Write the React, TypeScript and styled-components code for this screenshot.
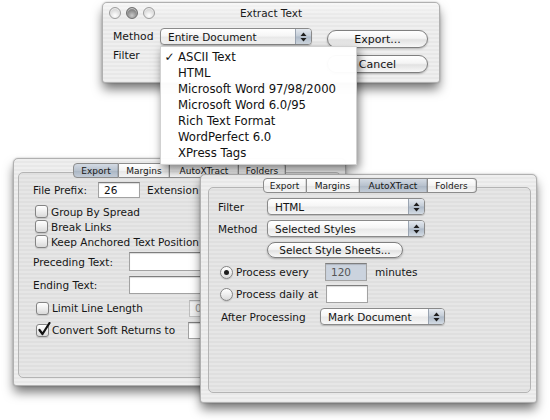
import React from "react";
import styled, { createGlobalStyle, css } from "styled-components";

const Global = createGlobalStyle`
  html, body { margin: 0; padding: 0; background: #ffffff; }
  body { font-family: "DejaVu Sans", "Noto Sans", sans-serif; color: #141414; }
`;

const Desktop = styled.div`
  position: relative;
  width: 550px;
  height: 420px;
  overflow: hidden;
  background: #ffffff;
`;

const pinstripe = css`
  background-color: #ececec;
  background-image: repeating-linear-gradient(
    to bottom,
    #efefef 0px,
    #efefef 2px,
    #e8e8e8 2px,
    #e8e8e8 4px
  );
`;

const Window = styled.div<{ $x: number; $y: number; $w: number; $h: number; $z: number; $pad?: string }>`
  position: absolute;
  left: ${(p) => p.$x}px;
  top: ${(p) => p.$y}px;
  width: ${(p) => p.$w}px;
  height: ${(p) => p.$h}px;
  z-index: ${(p) => p.$z};
  box-sizing: border-box;
  padding: ${(p) => p.$pad ?? "0"};
  ${pinstripe}
  border: 1px solid #b0b0b0;
  border-radius: 5px 5px 3px 3px;
  box-shadow: 0 7px 11px -1px rgba(0, 0, 0, 0.55), 0 0 2px rgba(0, 0, 0, 0.25);
  display: flex;
  flex-direction: column;
`;

const TitleBar = styled.div`
  height: 20px;
  display: grid;
  grid-template-columns: 1fr auto 1fr;
  align-items: center;
  background-image: linear-gradient(to bottom, rgba(255, 255, 255, 0.55), rgba(255, 255, 255, 0) 70%);
  border-radius: 4px 4px 0 0;
`;

const Lights = styled.div`
  display: flex;
  gap: 5px;
  padding-left: 6px;
`;

const Light = styled.span<{ $dark?: boolean }>`
  width: 12px;
  height: 12px;
  border-radius: 50%;
  box-sizing: border-box;
  border: 1px solid ${(p) => (p.$dark ? "#6f6f6f" : "#9d9d9d")};
  background: ${(p) =>
    p.$dark
      ? "radial-gradient(circle at 50% 75%, #c9c9c9 0%, #8a8a8a 55%, #5f5f5f 100%)"
      : "radial-gradient(circle at 50% 75%, #ffffff 0%, #e2e2e2 50%, #bdbdbd 100%)"};
  box-shadow: inset 0 1px 1px rgba(255, 255, 255, 0.7);
`;

const Title = styled.div`
  font-size: 10.5px;
  color: #1a1a1a;
  text-align: center;
  white-space: nowrap;
`;

const TopBody = styled.div`
  flex: 1;
  display: flex;
  padding-left: 10px;
`;

const FormCol = styled.div`
  display: flex;
  flex-direction: column;
  padding-top: 4px;
`;

const ButtonCol = styled.div`
  display: flex;
  flex-direction: column;
  gap: 7px;
  padding-top: 7px;
  margin-left: 15px;
`;

const FormRow = styled.div<{ $h?: number; $mt?: number; $pl?: number }>`
  display: flex;
  align-items: center;
  height: ${(p) => p.$h ?? 19}px;
  margin-top: ${(p) => p.$mt ?? 0}px;
  padding-left: ${(p) => p.$pl ?? 0}px;
  white-space: nowrap;
`;

const Label = styled.span<{ $w?: number; $size?: number; $ml?: number }>`
  display: inline-block;
  width: ${(p) => (p.$w ? `${p.$w}px` : "auto")};
  margin-left: ${(p) => p.$ml ?? 0}px;
  flex-shrink: 0;
  font-size: ${(p) => p.$size ?? 10.5}px;
  color: #161616;
  white-space: nowrap;
`;

const Popup = styled.div<{ $w: number; $size?: number }>`
  width: ${(p) => p.$w}px;
  height: 17px;
  flex-shrink: 0;
  box-sizing: border-box;
  display: flex;
  border: 1px solid #8a8a8a;
  border-radius: 4px;
  background: linear-gradient(to bottom, #ffffff 0%, #f6f6f6 45%, #e9e9e9 55%, #f7f7f7 100%);
  box-shadow: 0 1px 1px rgba(0, 0, 0, 0.18);
  font-size: ${(p) => p.$size ?? 10.5}px;
  overflow: hidden;
`;

const PopupText = styled.span`
  flex: 1;
  display: flex;
  align-items: center;
  padding-left: 7px;
  white-space: nowrap;
  overflow: hidden;
`;

const PopupArrows = styled.span`
  width: 15px;
  flex-shrink: 0;
  border-left: 1px solid #9aa4b1;
  background: linear-gradient(to bottom, #e4e9ef 0%, #c3ccd7 48%, #aebac8 52%, #d3dbe4 100%);
  display: flex;
  align-items: center;
  justify-content: center;
`;

const PushButton = styled.div<{ $w: number; $h?: number; $size?: number }>`
  width: ${(p) => p.$w}px;
  height: ${(p) => p.$h ?? 18}px;
  flex-shrink: 0;
  box-sizing: border-box;
  border: 1px solid #7f7f7f;
  border-radius: 10px;
  background: linear-gradient(to bottom, #ffffff 0%, #f4f4f4 45%, #e2e2e2 55%, #f8f8f8 100%);
  box-shadow: 0 1px 2px rgba(0, 0, 0, 0.25);
  display: flex;
  align-items: center;
  justify-content: center;
  font-size: ${(p) => p.$size ?? 11}px;
  color: #141414;
  white-space: nowrap;
`;

const Menu = styled.div`
  position: absolute;
  left: 160px;
  top: 46px;
  width: 197px;
  height: 119px;
  z-index: 4;
  box-sizing: border-box;
  padding-top: 2px;
  background: rgba(255, 255, 255, 0.97);
  border: 1px solid rgba(0, 0, 0, 0.18);
  box-shadow: 2px 4px 9px rgba(0, 0, 0, 0.5);
`;

const MenuItem = styled.div`
  display: grid;
  grid-template-columns: 17px 1fr;
  align-items: center;
  height: 16px;
  font-size: 11.7px;
  color: #111;
  white-space: nowrap;
`;

const Check = styled.span`
  display: flex;
  justify-content: center;
  font-size: 12px;
  font-weight: bold;
`;

const TabStrip = styled.div`
  display: flex;
  justify-content: center;
  height: 15px;
  position: relative;
  z-index: 1;
`;

const Tab = styled.div<{ $w: number; $active?: boolean; $first?: boolean; $last?: boolean }>`
  width: ${(p) => p.$w}px;
  height: 15px;
  box-sizing: border-box;
  border: 1px solid #8c8c8c;
  border-left-width: ${(p) => (p.$first ? 1 : 0)}px;
  border-radius: ${(p) => (p.$first ? "4px 0 0 4px" : p.$last ? "0 4px 4px 0" : "0")};
  background: ${(p) =>
    p.$active
      ? "linear-gradient(to bottom, #d3dae3 0%, #b8c2ce 50%, #a9b5c3 52%, #c3ccd7 100%)"
      : "linear-gradient(to bottom, #ffffff 0%, #f3f3f3 50%, #e6e6e6 52%, #f5f5f5 100%)"};
  box-shadow: inset -1px 0 0 rgba(0, 0, 0, 0.12);
  display: flex;
  align-items: center;
  justify-content: center;
  font-size: 9px;
  color: #161616;
  white-space: nowrap;
`;

const GroupBox = styled.div<{ $pad: string }>`
  flex: 1;
  margin-top: -6px;
  box-sizing: border-box;
  border: 1px solid #b4b4b4;
  border-radius: 5px;
  background: rgba(0, 0, 0, 0.035);
  padding: ${(p) => p.$pad};
  display: flex;
  flex-direction: column;
`;

const Field = styled.div<{ $w: number; $h: number; $tone?: "white" | "sel" | "off" }>`
  width: ${(p) => p.$w}px;
  height: ${(p) => p.$h}px;
  flex-shrink: 0;
  box-sizing: border-box;
  border: 1px solid #a2a2a2;
  border-top-color: #7e7e7e;
  box-shadow: inset 0 1px 1px rgba(0, 0, 0, 0.15);
  background: ${(p) => (p.$tone === "sel" ? "#cbd3de" : "#ffffff")};
  opacity: ${(p) => (p.$tone === "off" ? 0.55 : 1)};
  display: flex;
  align-items: center;
  padding-left: 5px;
  font-size: 10.5px;
  color: ${(p) => (p.$tone === "white" ? "#111" : "#555")};
`;

const Box13 = styled.span<{ $round?: boolean }>`
  width: 13px;
  height: 13px;
  flex-shrink: 0;
  box-sizing: border-box;
  border: 1px solid #848484;
  border-radius: ${(p) => (p.$round ? "50%" : "3px")};
  background: linear-gradient(to bottom, #ffffff 0%, #eeeeee 50%, #d9d9d9 100%);
  box-shadow: 0 1px 1px rgba(0, 0, 0, 0.12);
  display: flex;
  align-items: center;
  justify-content: center;
  position: relative;
  margin-right: 3px;
`;

const Dot = styled.span`
  width: 5px;
  height: 5px;
  border-radius: 50%;
  background: #1c1c1c;
`;

const CheckMark = styled.svg`
  position: absolute;
  left: 1px;
  top: -3px;
`;

const Arrows = () => (
  <svg width="7" height="10" viewBox="0 0 7 10">
    <path d="M3.5 0.5 L6.5 4 L0.5 4 Z" fill="#1e1e1e" />
    <path d="M3.5 9.5 L6.5 6 L0.5 6 Z" fill="#1e1e1e" />
  </svg>
);

const PopupButton = ({ w, text, size }: { w: number; text: string; size?: number }) => (
  <Popup $w={w} $size={size}>
    <PopupText>{text}</PopupText>
    <PopupArrows>
      <Arrows />
    </PopupArrows>
  </Popup>
);

const CheckBox = ({ checked }: { checked?: boolean }) => (
  <Box13>
    {checked && (
      <CheckMark width="13" height="14" viewBox="0 0 13 14">
        <path d="M1.5 8 L4.5 12 L11.5 1" fill="none" stroke="#111" strokeWidth="2.2" strokeLinecap="round" strokeLinejoin="round" />
      </CheckMark>
    )}
  </Box13>
);

const Radio = ({ on }: { on?: boolean }) => <Box13 $round>{on && <Dot />}</Box13>;

const tabsLeft = [
  { t: "Export", w: 46 },
  { t: "Margins", w: 51 },
  { t: "AutoXTract", w: 69 },
  { t: "Folders", w: 47 },
];
const tabsRight = [
  { t: "Export", w: 44 },
  { t: "Margins", w: 53 },
  { t: "AutoXTract", w: 68 },
  { t: "Folders", w: 49 },
];

const Tabs = ({ items, active }: { items: { t: string; w: number }[]; active: number }) => (
  <TabStrip>
    {items.map((it, i) => (
      <Tab key={it.t} $w={it.w} $active={i === active} $first={i === 0} $last={i === items.length - 1}>
        {it.t}
      </Tab>
    ))}
  </TabStrip>
);

const menuItems = [
  "ASCII Text",
  "HTML",
  "Microsoft Word 97/98/2000",
  "Microsoft Word 6.0/95",
  "Rich Text Format",
  "WordPerfect 6.0",
  "XPress Tags",
];

export default function App() {
  return (
    <>
      <Global />
      <Desktop>
        {/* Left panel: Export tab */}
        <Window $x={13} $y={158} $w={333} $h={228} $z={1} $pad="4px 4px 7px 4px">
          <Tabs items={tabsLeft} active={0} />
          <GroupBox $pad="8px 0 0 14px">
            <FormRow $h={18}>
              <Label $w={65}>File Prefix:</Label>
              <Field $w={42} $h={16} $tone="white">26</Field>
              <Label $ml={7}>Extension</Label>
            </FormRow>
            <FormRow $h={15} $mt={5} $pl={2}>
              <CheckBox />
              <Label>Group By Spread</Label>
            </FormRow>
            <FormRow $h={15} $pl={2}>
              <CheckBox />
              <Label>Break Links</Label>
            </FormRow>
            <FormRow $h={15} $pl={2}>
              <CheckBox />
              <Label>Keep Anchored Text Position</Label>
            </FormRow>
            <FormRow $h={19} $mt={3}>
              <Label $w={96}>Preceding Text:</Label>
              <Field $w={160} $h={19} $tone="white" />
            </FormRow>
            <FormRow $h={19} $mt={4}>
              <Label $w={96}>Ending Text:</Label>
              <Field $w={160} $h={18} $tone="white" />
            </FormRow>
            <FormRow $h={18} $mt={5} $pl={3}>
              <CheckBox />
              <Label $w={137}>Limit Line Length</Label>
              <Field $w={40} $h={17} $tone="off">0</Field>
            </FormRow>
            <FormRow $h={18} $mt={4} $pl={3}>
              <CheckBox checked />
              <Label $w={136}>Convert Soft Returns to</Label>
              <Field $w={40} $h={17} $tone="white" />
            </FormRow>
          </GroupBox>
        </Window>

        {/* Right panel: AutoXTract tab */}
        <Window $x={200} $y={174} $w={337} $h={229} $z={2} $pad="3px 5px 9px 7px">
          <Tabs items={tabsRight} active={2} />
          <GroupBox $pad="10px 0 0 9px">
            <FormRow $h={17}>
              <Label $w={49}>Filter</Label>
              <PopupButton w={158} text="HTML" />
            </FormRow>
            <FormRow $h={17} $mt={5}>
              <Label $w={49}>Method</Label>
              <PopupButton w={158} text="Selected Styles" />
            </FormRow>
            <FormRow $h={16} $mt={5} $pl={49}>
              <PushButton $w={136} $h={16} $size={10.5}>Select Style Sheets...</PushButton>
            </FormRow>
            <FormRow $h={18} $mt={5} $pl={2}>
              <Radio on />
              <Label $w={89}>Process every</Label>
              <Field $w={42} $h={18} $tone="sel">120</Field>
              <Label $ml={8}>minutes</Label>
            </FormRow>
            <FormRow $h={18} $mt={4} $pl={2}>
              <Radio />
              <Label $w={90}>Process daily at</Label>
              <Field $w={42} $h={18} $tone="white" />
            </FormRow>
            <FormRow $h={17} $mt={5} $pl={3}>
              <Label $w={99}>After Processing</Label>
              <PopupButton w={125} text="Mark Document" />
            </FormRow>
          </GroupBox>
        </Window>

        {/* Top dialog: Extract Text */}
        <Window $x={102} $y={2} $w={338} $h={81} $z={3}>
          <TitleBar>
            <Lights>
              <Light />
              <Light $dark />
              <Light />
            </Lights>
            <Title>Extract Text</Title>
            <span />
          </TitleBar>
          <TopBody>
            <FormCol>
              <FormRow>
                <Label $w={47} $size={10.8}>Method</Label>
                <PopupButton w={152} text="Entire Document" />
              </FormRow>
              <FormRow>
                <Label $w={47} $size={10.8}>Filter</Label>
              </FormRow>
            </FormCol>
            <ButtonCol>
              <PushButton $w={101}>Export...</PushButton>
              <PushButton $w={101}>Cancel</PushButton>
            </ButtonCol>
          </TopBody>
        </Window>

        <Menu>
          {menuItems.map((m, i) => (
            <MenuItem key={m}>
              <Check>{i === 0 ? "✓" : ""}</Check>
              <span>{m}</span>
            </MenuItem>
          ))}
        </Menu>
      </Desktop>
    </>
  );
}
